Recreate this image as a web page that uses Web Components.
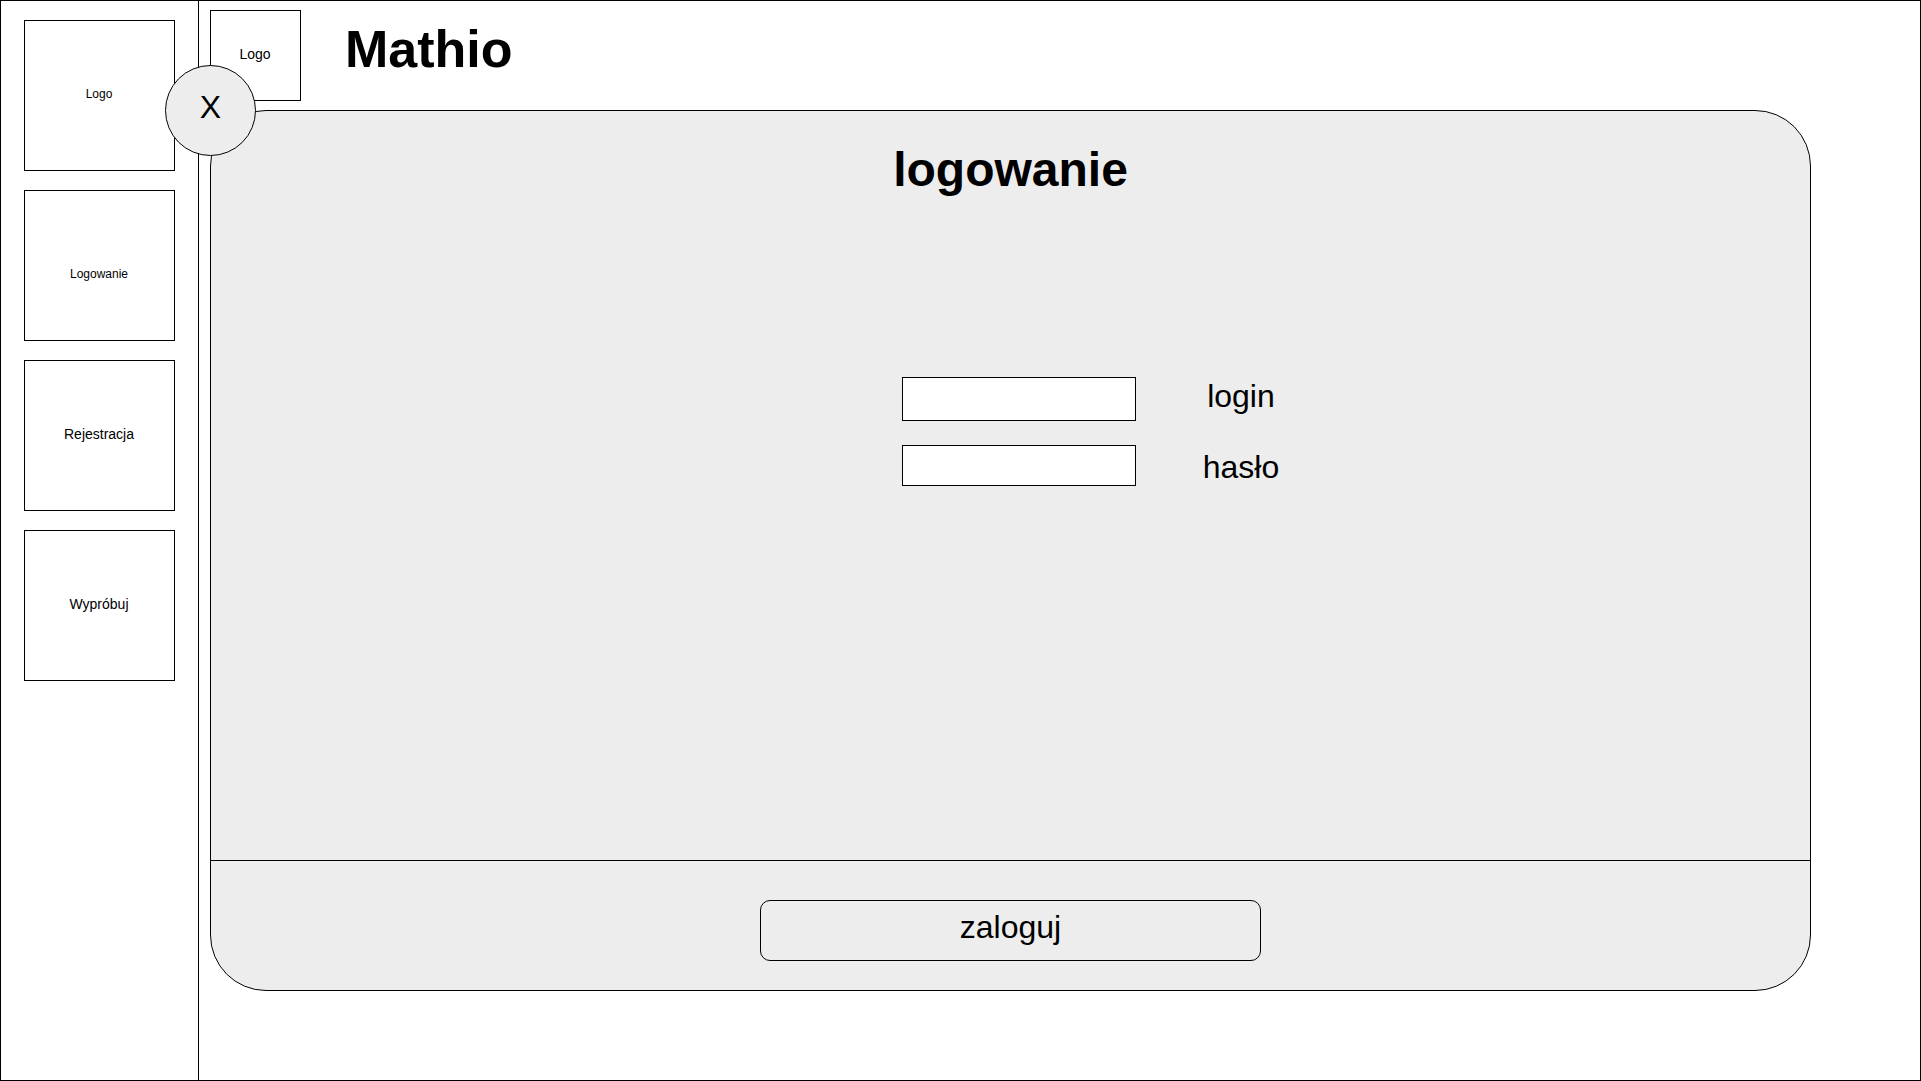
<!DOCTYPE html>
<html lang="pl">
<head>
<meta charset="utf-8">
<meta name="viewport" content="width=device-width, initial-scale=1">
<title>Mathio</title>
<style>
  body {
    margin: 0;
    background: #fff;
    color: #000;
    font-family: "Liberation Sans", Arial, Helvetica, sans-serif;
    --line: 1px solid #000;
    --panel: #ededed;
  }
</style>
</head>
<body>
<app-shell>
  <side-nav slot="side">
    <nav-tile href="#start" compact>Logo</nav-tile>
    <nav-tile href="#logowanie" compact><br>Logowanie</nav-tile>
    <nav-tile href="#rejestracja">Rejestracja</nav-tile>
    <nav-tile href="#wyprobuj">Wypróbuj</nav-tile>
  </side-nav>
  <site-header>Mathio</site-header>
  <login-panel></login-panel>
</app-shell>

<script>
  function define(name, markup, setup) {
    const template = document.createElement('template');
    template.innerHTML = markup;
    customElements.define(name, class extends HTMLElement {
      constructor() {
        super();
        this.attachShadow({ mode: 'open' }).append(template.content.cloneNode(true));
      }
      connectedCallback() {
        if (setup) setup(this);
      }
    });
  }

  define('app-shell', `
    <style>
      :host { display: flex; box-sizing: border-box; min-height: 100vh; border: var(--line); }
      main {
        flex: 1; min-width: 0; box-sizing: border-box;
        display: flex; flex-direction: column; gap: 9px;
        padding: 9px 109px 89px 11px;
      }
      ::slotted(login-panel) { flex: 1; }
    </style>
    <slot name="side"></slot>
    <main><slot></slot></main>
  `);

  define('side-nav', `
    <style>
      :host { display: block; flex: none; border-right: var(--line); }
      nav { display: flex; flex-direction: column; gap: 19px; padding: 19px 23px; }
    </style>
    <nav><slot></slot></nav>
  `);

  define('nav-tile', `
    <style>
      :host { display: block; }
      a {
        display: flex; align-items: center; justify-content: center;
        box-sizing: border-box; width: 151px; height: 151px; padding: 0 1px 3px 0;
        border: var(--line); color: inherit; text-decoration: none; text-align: center;
        font-size: 14px; line-height: 20px;
      }
      :host([compact]) span { font-size: 12px; }
    </style>
    <a><span><slot></slot></span></a>
  `, host => {
    host.shadowRoot.querySelector('a').href = host.getAttribute('href');
  });

  define('site-header', `
    <style>
      :host { display: block; }
      header { display: flex; align-items: flex-start; gap: 44px; }
      a {
        display: flex; align-items: center; justify-content: center; flex: none;
        box-sizing: border-box; width: 91px; height: 91px; padding: 0 1px 3px 0;
        border: var(--line); color: inherit; text-decoration: none;
        font-size: 14px; line-height: 20px;
      }
      h1 { margin: 0; font-size: 52px; line-height: 78px; }
    </style>
    <header>
      <a href="#start">Logo</a>
      <h1><slot></slot></h1>
    </header>
  `);

  define('login-panel', `
    <style>
      :host { display: flex; position: relative; }
      form {
        flex: 1; display: flex; flex-direction: column; box-sizing: border-box;
        border: var(--line); border-radius: 56px; background: var(--panel);
      }
      .body { flex: 1; padding: 29px 0; }
      h2 { margin: 0 0 177px; font-size: 48px; line-height: 60px; text-align: center; }
      .fields { display: flex; justify-content: center; gap: 67px; padding-left: 10%; }
      .inputs, .labels { display: flex; flex-direction: column; }
      .inputs { gap: 24px; }
      .labels { gap: 33px; font-size: 32px; line-height: 38px; text-align: center; }
      input {
        box-sizing: border-box; width: 234px; height: 44px; margin: 0; padding: 0 8px;
        border: var(--line); border-radius: 0; background: #fff; font: inherit; font-size: 24px;
      }
      #haslo { height: 41px; }
      footer { display: flex; justify-content: center; border-top: var(--line); padding: 39px 20px 29px; }
      button {
        box-sizing: border-box; margin: 0; padding: 0 0 7px; border: var(--line);
        background: var(--panel); color: inherit; font: inherit; font-size: 32px; line-height: 38px;
      }
      .submit { width: 501px; height: 61px; border-radius: 10px; }
      .close {
        position: absolute; left: -45px; top: -45px;
        width: 91px; height: 91px; border-radius: 50%;
      }
    </style>
    <form>
      <div class="body">
        <h2>logowanie</h2>
        <div class="fields">
          <div class="inputs">
            <input id="login" type="text" autocomplete="username">
            <input id="haslo" type="password" autocomplete="current-password">
          </div>
          <div class="labels">
            <label for="login">login</label>
            <label for="haslo">hasło</label>
          </div>
        </div>
      </div>
      <footer><button class="submit" type="submit">zaloguj</button></footer>
    </form>
    <button class="close" type="button">X</button>
  `, host => {
    host.shadowRoot.querySelector('form').addEventListener('submit', e => e.preventDefault());
  });
</script>
</body>
</html>
